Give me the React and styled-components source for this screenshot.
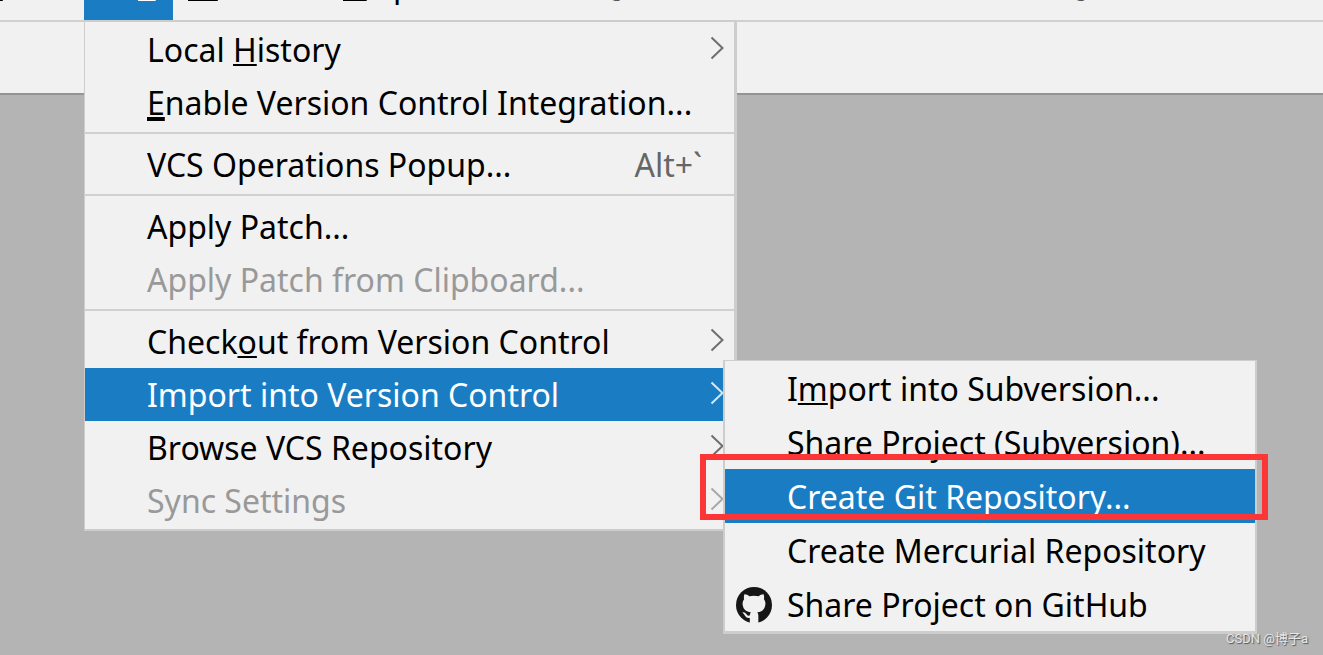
import React from "react";
import styled, { createGlobalStyle } from "styled-components";

const GlobalStyle = createGlobalStyle`
  * {
    box-sizing: border-box;
  }
  body {
    margin: 0;
    background: #b4b4b4;
    font-family: "Noto Sans", "Noto Sans CJK SC", sans-serif;
  }
`;

const GitHubIcon = () => (
  <svg width="36" height="36" viewBox="0 0 24 24" aria-hidden="true">
    <circle cx="12" cy="12" r="12" fill="#161616" />
    <path
      fill="#f1f1f1"
      d="M5.6 4.9C6.8 4.8 8 5.5 8.9 6.2Q12 5.5 15.1 6.2C16 5.5 17.3 4.8 18.4 4.9Q19 6.6 18.6 8.1C19.6 9.3 19.8 10.8 19.5 12.2C19 15.2 17.1 16.5 14.2 16.9Q14.9 17.7 14.9 19V24H9.2V20.6Q6.9 20.9 6 19.1Q5.4 17.8 4.2 17Q5.9 16.5 7.1 18.3Q8 19.5 9.3 18.9Q9.3 17.7 9.9 16.9C6.9 16.5 5 15.2 4.5 12.2C4.2 10.8 4.5 9.3 5.4 8.1Q5 6.6 5.6 4.9Z"
    />
  </svg>
);

const vcsMenu = [
  { before: "Local ", key: "H", after: "istory", arrow: true },
  { key: "E", after: "nable Version Control Integration...", thick: true },
  { line: true },
  { before: "VCS Operations Popup...", shortcut: "Alt+`" },
  { line: true },
  { before: "Apply Patch..." },
  { before: "Apply Patch from Clipboard...", disabled: true },
  { line: true },
  { before: "Check", key: "o", after: "ut from Version Control", arrow: true },
  { before: "Import into Version Control", arrow: true, active: true, open: true },
  { before: "Browse VCS Repository", arrow: true },
  { before: "Sync Settings", arrow: true, disabled: true },
];

const importMenu = [
  { before: "I", key: "m", after: "port into Subversion..." },
  { before: "Share Project (Subversion)..." },
  { before: "Create Git Repository...", active: true, marked: true },
  { before: "Create Mercurial Repository" },
  { before: "Share Project on GitHub", icon: <GitHubIcon /> },
];

const Label = ({ item }) => (
  <span>
    {item.before}
    {item.key && <Mnemonic $thick={item.thick}>{item.key}</Mnemonic>}
    {item.after}
  </span>
);

const Chevron = ({ active }) => (
  <Arrow $active={active} viewBox="0 0 14 24" aria-hidden="true">
    <path d="M1.5 1.5 12.5 12 1.5 22.5" />
  </Arrow>
);

const App = () => {
  return (
    <Page>
      <GlobalStyle />
      <MenuBar>
        <BarItem $width={114}>
          <BarButton>
            <Mnemonic>T</Mnemonic>ools
          </BarButton>
        </BarItem>
        <BarItem $width={89}>
          <BarButton $active>
            VC<Mnemonic>S</Mnemonic>
          </BarButton>
          <Menu>
            {vcsMenu.map((item, i) =>
              item.line ? (
                <Line key={i} />
              ) : (
                <Row key={i}>
                  <RowButton $active={item.active} disabled={item.disabled}>
                    <Label item={item} />
                    {item.shortcut && <Shortcut>{item.shortcut}</Shortcut>}
                    {item.arrow && <Chevron active={item.active} />}
                  </RowButton>
                  {item.open && (
                    <SubMenu>
                      {importMenu.map((sub) => (
                        <Row key={sub.before}>
                          <SubButton $active={sub.active}>
                            <IconSlot>{sub.icon}</IconSlot>
                            <Label item={sub} />
                          </SubButton>
                          {sub.marked && <Marker />}
                        </Row>
                      ))}
                    </SubMenu>
                  )}
                </Row>
              )
            )}
          </Menu>
        </BarItem>
        <BarItem $width={155}>
          <BarButton>
            <Mnemonic>W</Mnemonic>indow
          </BarButton>
        </BarItem>
        <BarItem $width={155}>
          <BarButton>
            <Mnemonic>H</Mnemonic>elp
          </BarButton>
        </BarItem>
        <Title>
          <span>g</span>
          <span>g</span>
        </Title>
      </MenuBar>
      <Toolbar />
      <Watermark>CSDN @博子a</Watermark>
    </Page>
  );
};

const Page = styled.div`
  height: 100vh;
  overflow: hidden;
  position: relative;
  display: flex;
  flex-direction: column;
`;

const MenuBar = styled.nav`
  display: flex;
  flex: none;
  height: 62px;
  margin: -42px 0 0 -30px;
  background: #f1f1f1;
`;

const BarItem = styled.div`
  position: relative;
  width: ${(props) => props.$width}px;
`;

const BarButton = styled.button`
  width: 100%;
  height: 100%;
  display: flex;
  align-items: flex-start;
  padding: 0 15px;
  border: 0;
  background: ${(props) => (props.$active ? "#1a7dc4" : "transparent")};
  color: ${(props) => (props.$active ? "#fff" : "#000")};
  font-family: inherit;
  font-size: 32px;
  line-height: 53px;
`;

const Title = styled.div`
  display: flex;
  gap: 452px;
  padding-left: 128px;
  color: #555;
  font-size: 20px;
  line-height: 62px;
`;

const Toolbar = styled.div`
  flex: none;
  height: 75px;
  background: #f1f1f1;
  border-top: 2px solid #d0d0d0;
  border-bottom: 2px solid #949494;
`;

const Menu = styled.ul`
  position: absolute;
  z-index: 1;
  top: 100%;
  left: 0;
  min-width: 653px;
  margin: 0;
  padding: 1px 0 2px;
  list-style: none;
  background: #f1f1f1;
  border: solid #cdcdcd;
  border-width: 2px 3px 2px 1px;
`;

const SubMenu = styled(Menu)`
  top: -8px;
  left: calc(100% - 11px);
  min-width: 534px;
  padding: 0;
  border-width: 1px 2px 3px 2px;
`;

const Row = styled.li`
  position: relative;
`;

const RowButton = styled.button`
  width: 100%;
  height: 53px;
  display: flex;
  align-items: center;
  justify-content: space-between;
  padding: 0 10px 0 62px;
  border: 0;
  background: ${(props) => (props.$active ? "#1a7dc4" : "transparent")};
  color: ${(props) => (props.$active ? "#fff" : "#000")};
  font-family: inherit;
  font-size: 32px;
  line-height: 53px;
  white-space: nowrap;
  text-align: left;

  &:disabled {
    color: #999;
  }
`;

const SubButton = styled(RowButton)`
  height: 54px;
  justify-content: flex-start;
  gap: 15px;
  padding: 2px 11px 0;
  line-height: 52px;
`;

const IconSlot = styled.span`
  width: 36px;
  height: 36px;
  flex: none;
  display: flex;
`;

const Mnemonic = styled.span`
  text-decoration: underline;
  text-decoration-thickness: ${(props) => (props.$thick ? 4 : 2)}px;
  text-decoration-skip-ink: none;
  text-underline-offset: 2px;
`;

const Shortcut = styled.span`
  color: #666;
  margin-right: 22px;
`;

const Arrow = styled.svg`
  width: 14px;
  height: 24px;
  margin-bottom: 4px;
  fill: none;
  stroke: ${(props) => (props.$active ? "#d5e8f6" : "#6e6e6e")};
  stroke-width: 2;

  ${RowButton}:disabled & {
    stroke: #a8a8a8;
  }
`;

const Line = styled.li`
  height: 2px;
  margin: 3px 0 4px;
  background: #d0d0d0;
`;

const Marker = styled.div`
  position: absolute;
  z-index: 2;
  top: -15px;
  right: -13px;
  bottom: 3px;
  left: -25px;
  border: 6px solid #fc3636;
  pointer-events: none;
`;

const Watermark = styled.span`
  position: absolute;
  right: 15px;
  bottom: 7px;
  color: #e6e6e6;
  font-family: Roboto, "Noto Sans CJK SC", sans-serif;
  font-size: 13px;
  line-height: 18px;
  text-shadow: 1px 1px 1px #555;
`;

export default App;
